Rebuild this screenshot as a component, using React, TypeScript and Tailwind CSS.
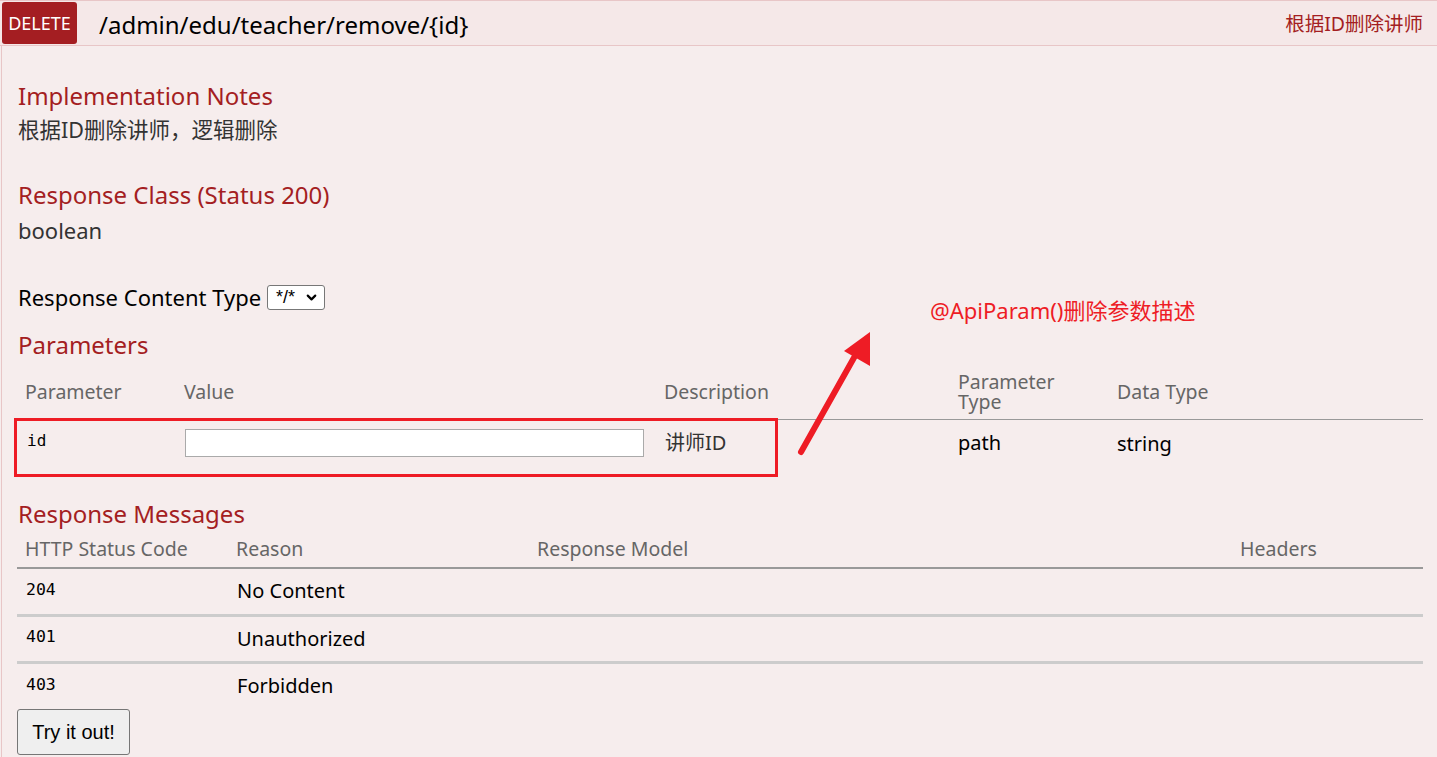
import { ChevronDown } from "lucide-react";

const font = { fontFamily: '"Noto Sans", "Noto Sans CJK SC", sans-serif' };
const mono = "[font-family:'DejaVu_Sans_Mono',monospace]";

export default function App() {
  return (
    <div className="w-[1437px] h-[757px] overflow-hidden bg-[#f6eded]" style={font}>
      {/* heading bar */}
      <div className="flex h-[46px] items-center border-y border-[#e8c6c7] bg-[#f5e8e8] pl-[2px] pr-[14px]">
        <span className="flex h-[42px] w-[75px] items-center justify-center rounded-[3px] bg-[#a41e22] text-[18px] text-white">
          DELETE
        </span>
        <span className="ml-[22px] pt-[3px] text-[24px] text-black">/admin/edu/teacher/remove/{"{id}"}</span>
        <span className="ml-auto pt-[2px] text-[19.5px] text-[#a41e22]">根据ID删除讲师</span>
      </div>

      <div className="relative ml-[1px] h-[711px] border-l border-[#e8c6c7] pl-[16px] pr-[13px] pt-[34px]">
        <h4 className="text-[24px] leading-[32px] text-[#a41e22]">Implementation Notes</h4>
        <p className="text-[21.5px] leading-[36px] text-[#333]">根据ID删除讲师，逻辑删除</p>

        <h4 className="mt-[31px] text-[24px] leading-[32px] text-[#a41e22]">Response Class (Status 200)</h4>
        <p className="text-[22px] leading-[38px] text-[#333]">boolean</p>

        <div className="mt-[34px] flex h-[28px] items-center gap-[6px]">
          <span className="text-[22px] leading-[28px] text-black">Response Content Type</span>
          <span className="flex h-[25px] w-[58px] items-center justify-between rounded-[3px] border border-[#777] bg-white pl-[8px] pr-[5px] text-[18px] text-black [font-family:'Liberation_Sans',sans-serif]">
            */*
            <ChevronDown size={15} strokeWidth={3.5} />
          </span>
        </div>

        <h4 className="mt-[18px] text-[24px] leading-[32px] text-[#a41e22]">Parameters</h4>

        <table className="mt-[5px] ml-[-1px] w-[1406px] table-fixed border-collapse">
          <colgroup>
            <col className="w-[160px]" />
            <col className="w-[480px]" />
            <col className="w-[293px]" />
            <col className="w-[159px]" />
            <col />
          </colgroup>
          <thead>
            <tr className="h-[53px] border-b border-[#999] text-left align-middle text-[19.5px] leading-[20px] text-[#666]">
              <th className="px-[8px] font-normal">Parameter</th>
              <th className="px-[7px] font-normal">Value</th>
              <th className="px-[7px] font-normal">Description</th>
              <th className="px-[8px] font-normal">
                Parameter
                <br />
                Type
              </th>
              <th className="px-[8px] font-normal">Data Type</th>
            </tr>
          </thead>
          <tbody>
            <tr className="h-[47px] text-[20px]">
              <td className={`px-[10px] pb-[3px] text-[16px] text-black ${mono}`}>id</td>
              <td className="px-[8px]">
                <div className="h-[28px] w-[459px] border border-[#aaa] bg-white" />
              </td>
              <td className="px-[8px] text-[#333]">讲师ID</td>
              <td className="px-[8px] text-black">path</td>
              <td className="px-[8px] pt-[2px] text-black">string</td>
            </tr>
          </tbody>
        </table>

        <h4 className="mt-[32px] text-[24px] leading-[32px] text-[#a41e22]">Response Messages</h4>

        <table className="mt-[1px] ml-[-1px] w-[1406px] table-fixed border-collapse">
          <colgroup>
            <col className="w-[211px]" />
            <col className="w-[301px]" />
            <col className="w-[703px]" />
            <col />
          </colgroup>
          <thead>
            <tr className="h-[37px] border-b-2 border-[#999] text-left text-[19.5px] text-[#666]">
              <th className="px-[8px] font-normal">HTTP Status Code</th>
              <th className="px-[8px] font-normal">Reason</th>
              <th className="px-[8px] font-normal">Response Model</th>
              <th className="px-[8px] font-normal">Headers</th>
            </tr>
          </thead>
          <tbody className="text-[20px] text-black">
            {[
              ["204", "No Content"],
              ["401", "Unauthorized"],
              ["403", "Forbidden"],
            ].map(([code, reason], i) => (
              <tr key={code} className={`h-[47px] ${i < 2 ? "border-b-[3px] border-[#ccc]" : ""}`}>
                <td className={`px-[9px] pb-[2px] text-[16.5px] ${mono}`}>{code}</td>
                <td className="px-[9px]">{reason}</td>
                <td />
                <td />
              </tr>
            ))}
          </tbody>
        </table>

        <button className="ml-[-1px] h-[46px] w-[113px] rounded-[3px] border border-[#767676] bg-[#efefef] text-[20px] text-black [font-family:'Liberation_Sans',sans-serif]">
          Try it out!
        </button>

        {/* annotation overlay */}
        <div className="pointer-events-none absolute left-[12px] top-[372px] h-[59px] w-[764px] border-[3px] border-[#ee1c25]" />
        <span className="absolute left-[928px] top-[248px] text-[22px] text-[#ee1c25]">@ApiParam()删除参数描述</span>
        <svg className="absolute left-[780px] top-[280px]" width="110" height="140" viewBox="0 0 110 140">
          <path d="M19 126 L78 21" stroke="#ee1c25" strokeWidth="6" strokeLinecap="round" fill="none" />
          <path d="M88 6 L62 25 L88 40 Z" fill="#ee1c25" />
        </svg>
      </div>
    </div>
  );
}
